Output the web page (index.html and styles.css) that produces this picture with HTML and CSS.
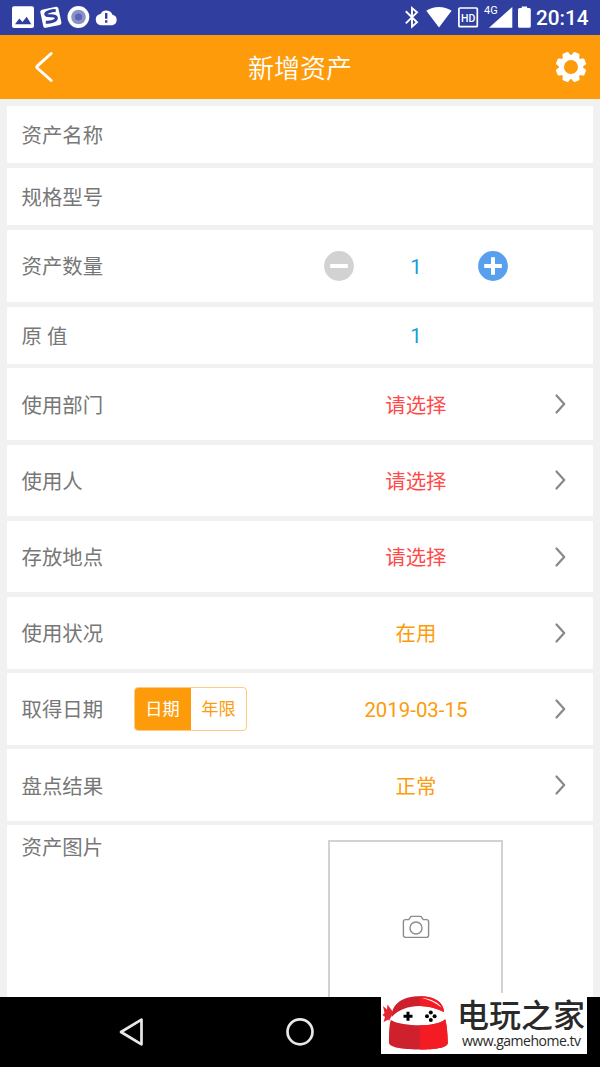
FILE: index.html
```html
<!DOCTYPE html>
<html lang="zh-CN">
<head>
<meta charset="utf-8">
<title>新增资产</title>
<link rel="stylesheet" href="styles.css">
</head>
<body>
<div class="screen">
  <div class="statusbar">
    <svg class="status-left" width="120" height="35" viewBox="0 0 120 35">
      <rect x="12" y="6.3" width="22" height="21.7" rx="2" fill="#fff"/>
      <path d="M15 24.2l4.3-5.8 3.2 3.6 4.2-5.2 4.6 7.4z" fill="#303f9f"/>
      <g transform="rotate(-12 50.8 17.3)">
        <rect x="41.6" y="8" width="18.5" height="18.6" rx="2.2" fill="#fff"/>
        <path d="M57 11.8c-3-.9-10.5-1-10.5 1.7 0 3 9.6 1.6 9.6 5.3 0 3.6-7.8 3.4-11.2 2.3" fill="none" stroke="#303f9f" stroke-width="3"/>
      </g>
      <circle cx="78.4" cy="17" r="10.9" fill="#fff"/>
      <circle cx="78.5" cy="17" r="7.3" fill="#8992ca"/>
      <circle cx="78.5" cy="17" r="3.6" fill="#5966b5"/>
      <path d="M101 25.2a5.7 5.7 0 0 1-.5-11.3 6.6 6.6 0 0 1 12 .9 5.3 5.3 0 0 1-.2 10.4z" fill="#fff"/>
      <path d="M106.2 13v5.8M106.2 20.3v2.5" stroke="#303f9f" stroke-width="2.4"/>
    </svg>
    <div class="status-right">
      <svg width="132" height="35" viewBox="0 0 132 35">
        <path d="M5.8 11.2l11.2 11-5 4.4V8l5 4.4-11.2 11" fill="none" stroke="#fff" stroke-width="1.9"/>
        <path d="M26.3 10.7C33 5.6 44.7 5.6 51.6 10.7L39 27.5z" fill="#fff"/>
        <rect x="58.9" y="8" width="18.4" height="18.7" rx="1" fill="none" stroke="#fff" stroke-width="1.7"/>
        <text class="hd" x="68.1" y="21.5" text-anchor="middle">HD</text>
        <text class="net" x="84" y="14.2">4G</text>
        <path d="M89 27.7L112.3 7v20.7z" fill="#fff"/>
        <path d="M118 9.6q0-1.500 1.500-1.500h2.200V6.400h5.400v1.700h2.200q1.500 0 1.500 1.500v16.600q0 1.500-1.500 1.500h-9.800q-1.500 0-1.500-1.500z" fill="#fff"/>
      </svg>
      <span class="clock">20:14</span>
    </div>
  </div>

  <div class="header">
    <svg class="back" width="24" height="36" viewBox="0 0 24 36"><path d="M18.200 4.500L4.200 17.200q-.9.900 0 1.800L18.200 31.500" fill="none" stroke="#fff" stroke-width="3" stroke-linecap="round"/></svg>
    <h1 class="title">新增资产</h1>
    <svg class="gear" width="32" height="32" viewBox="-16 -16 32 32">
      <circle r="9.500" fill="none" stroke="#fff" stroke-width="5"/>
      <g fill="#fff">
        <path id="tooth" transform="rotate(22.500)" d="M-4.600-10L-3.100-14.700Q-2.900-15.300-2.200-15.300H2.200Q2.900-15.300 3.100-14.700L4.600-10z"/>
        <use href="#tooth" transform="rotate(45)"/><use href="#tooth" transform="rotate(90)"/><use href="#tooth" transform="rotate(135)"/><use href="#tooth" transform="rotate(180)"/><use href="#tooth" transform="rotate(225)"/><use href="#tooth" transform="rotate(270)"/><use href="#tooth" transform="rotate(315)"/>
      </g>
    </svg>
  </div>

  <main class="form">
    <div class="row short"><span class="label">资产名称</span></div>
    <div class="row short"><span class="label">规格型号</span></div>
    <div class="row count">
      <span class="label">资产数量</span>
      <div class="stepper">
        <svg width="30" height="30" viewBox="0 0 30 30"><circle cx="15" cy="15" r="14.900" fill="#d2d2d2"/><path d="M6.200 15h17.600" stroke="#fff" stroke-width="4"/></svg>
        <span class="number">1</span>
        <svg width="30" height="30" viewBox="0 0 30 30"><circle cx="15" cy="15" r="14.900" fill="#589fee"/><path d="M6.200 15h17.600M15 6.200v17.600" stroke="#fff" stroke-width="4"/></svg>
      </div>
    </div>
    <div class="row short"><span class="label">原 值</span><span class="value number">1</span></div>
    <div class="row"><span class="label">使用部门</span><span class="value red">请选择</span><svg class="chevron" viewBox="0 0 12 20"><path d="M1.500 1.500l7.700 8.500-7.700 8.500"/></svg></div>
    <div class="row"><span class="label">使用人</span><span class="value red">请选择</span><svg class="chevron" viewBox="0 0 12 20"><path d="M1.500 1.500l7.700 8.500-7.700 8.500"/></svg></div>
    <div class="row"><span class="label">存放地点</span><span class="value red">请选择</span><svg class="chevron" viewBox="0 0 12 20"><path d="M1.500 1.500l7.700 8.500-7.700 8.500"/></svg></div>
    <div class="row"><span class="label">使用状况</span><span class="value orange">在用</span><svg class="chevron" viewBox="0 0 12 20"><path d="M1.500 1.500l7.700 8.500-7.700 8.500"/></svg></div>
    <div class="row">
      <span class="label">取得日期</span>
      <div class="toggle"><span class="option active">日期</span><span class="option">年限</span></div>
      <span class="value orange">2019-03-15</span><svg class="chevron" viewBox="0 0 12 20"><path d="M1.500 1.500l7.700 8.500-7.700 8.500"/></svg>
    </div>
    <div class="row"><span class="label">盘点结果</span><span class="value orange">正常</span><svg class="chevron" viewBox="0 0 12 20"><path d="M1.500 1.500l7.700 8.500-7.700 8.500"/></svg></div>
    <div class="row photo-row">
      <span class="label">资产图片</span>
      <div class="photo">
        <svg width="28" height="24" viewBox="0 0 28 24" fill="none" stroke="#8b8b8b" stroke-width="1.400"><path d="M3.500 4.600h3.300l1.600-2.500q.4-.7 1.200-.7h8.800q.8 0 1.200.7l1.600 2.500h3.300q2.100 0 2.100 2.100v13.600q0 2.100-2.100 2.100h-21q-2.100 0-2.100-2.100V6.700q0-2.100 2.100-2.100z"/><circle cx="14" cy="13" r="6"/></svg>
      </div>
    </div>
  </main>

  <div class="navbar">
    <svg width="330" height="70" viewBox="0 0 330 70" fill="none" stroke="#e8e8e8" stroke-width="2.700" stroke-linejoin="round"><path d="M121 35l20.500-12.300v24.600z"/><circle cx="300" cy="34.800" r="12.500"/></svg>
  </div>

  <div class="watermark">
    <svg class="ninja" width="70" height="61" viewBox="0 0 70 61">
      <path d="M10.700 24C10.500 10.500 22 3.200 39 3.200c15 0 23.500 6 24 15.800-8-4-16-6-24-6-12 0-21 3.500-28.300 11z" fill="#cf202e"/>
      <path d="M39 3.200c15 0 23.500 6 24 15.800-8-4-16-6-24-6z" fill="#f41c24"/>
      <path d="M41 5c8 .5 16 4 19.500 9.500C55 10 49 7 41 5z" fill="#fff"/>
      <path d="M12 19L6.500 11.500 6 16.600 2 13l1.500 7L1.500 22l2.500 2-1.500 5 5-2.500.5 1.500 4-8z" fill="#e52632"/>
      <path d="M9.800 27c6 3.800 18.200 5.200 29.200 5.200s20.500-2 25.200-6c2 6.800 2.300 16.800 2.600 23.300C67 55 53 56.500 39 56.500S8 55 8 49.500c0-6-.2-16 1.800-22.500z" fill="#cf202e"/>
      <path d="M39 32.200c11 0 20.500-2 25.200-6 2 6.800 2.300 16.800 2.600 23.300C67 55 53 56.500 39 56.500z" fill="#f41c24"/>
      <path d="M22.500 23.200h9M27 18.700v9" stroke="#000" stroke-width="3"/>
      <g fill="#000"><circle cx="49.800" cy="19.500" r="2"/><circle cx="49.800" cy="27" r="2"/><circle cx="46" cy="23.200" r="2"/><circle cx="53.600" cy="23.200" r="2"/></g>
    </svg>
    <div class="brand"><span class="brand-name">电玩之家</span><span class="brand-url">www.gamehome.tv</span></div>
  </div>
</div>
</body>
</html>
```
FILE: styles.css
```css
* { box-sizing: border-box; }
body { margin: 0; font-family: Roboto, "Noto Sans CJK SC", sans-serif; }
.screen { position: relative; width: 600px; height: 1067px; overflow: hidden; background: #f1f1f1; display: flex; flex-direction: column; }
.statusbar { flex: none; height: 35px; background: #303f9f; display: flex; justify-content: space-between; }
.status-left { display: block; }
.status-right { display: flex; width: 200px; }
.hd { font: 500 10.5px Roboto, sans-serif; fill: #fff; }
.net { font: 400 11px Roboto, sans-serif; fill: #fff; }
.clock { margin-left: 4px; font-size: 20.7px; font-weight: 500; line-height: 37px; color: #fff; white-space: nowrap; }
.header { flex: none; height: 63.5px; background: #fd9b0b; display: flex; align-items: center; justify-content: space-between; padding: 0 13px 0 33px; }
.back { width: 24px; margin-right: -4px; }
.title { margin: 0 8px 0 0; padding-top: 4px; font-size: 26px; line-height: 36px; font-weight: 350; color: #fff; }
.form { flex: none; height: 898px; overflow: hidden; display: flex; flex-direction: column; gap: 4.5px; padding: 7.5px 7px 0; }
.row { flex: none; display: grid; grid-template-columns: 112px 167.4px 229px 1fr; align-items: center; height: 71.65px; padding-left: 15px; background: #fff; }
.short { height: 57.3px; }
.count { height: 72.6px; }
.label, .value { font-size: 20.4px; line-height: 30px; padding-top: 3px; }
.label { grid-column: 1; grid-row: 1; margin-left: -0.5px; color: #777; white-space: nowrap; }
.value { grid-column: 3; grid-row: 1; justify-self: center; width: 200px; text-align: center; }
.number { font-size: 20.4px; line-height: 30px; padding-top: 2px; color: #169fd3; }
.red { color: #ff4a4a; }
.orange { color: #fd9b0b; }
.stepper { grid-column: 3; grid-row: 1; justify-self: center; width: 184px; display: flex; align-items: center; justify-content: space-between; }
.chevron { grid-column: 4; grid-row: 1; width: 12px; height: 20px; margin-left: 24.2px; fill: none; stroke: #888; stroke-width: 2.2; stroke-linecap: round; stroke-linejoin: round; }
.toggle { grid-column: 2; grid-row: 1; width: 113px; height: 44px; display: flex; border: 1px solid #fdcb82; border-radius: 4px; overflow: hidden; }
.option { flex: 1; text-align: center; font-size: 17.2px; line-height: 42px; color: #fd9b0b; }
.active { flex: 0 0 57px; margin: -1px 0 -1px -1px; line-height: 44px; background: #fd9b0b; color: #fff; }
.photo-row { height: 176px; align-items: start; padding-top: 5px; }
.photo { grid-column: 3; grid-row: 1; justify-self: center; width: 175px; height: 175px; margin-top: 9.5px; border: 2px solid #d2d2d2; display: flex; align-items: center; justify-content: center; }
.navbar { flex: none; height: 70.5px; background: #000; }
.watermark { position: absolute; left: 381px; top: 993px; width: 206px; height: 61px; background: #fff; display: flex; }
.ninja { flex: none; }
.brand { display: flex; flex-direction: column; padding-left: 6px; }
.brand-name { font-size: 32px; line-height: 32px; height: 40px; padding-top: 7px; font-weight: 500; color: #292929; white-space: nowrap; }
.brand-url { margin-left: 5px; font-family: "Open Sans", "Noto Sans", sans-serif; font-size: 14px; letter-spacing: -0.5px; line-height: 16px; color: #292929; white-space: nowrap; }
```
